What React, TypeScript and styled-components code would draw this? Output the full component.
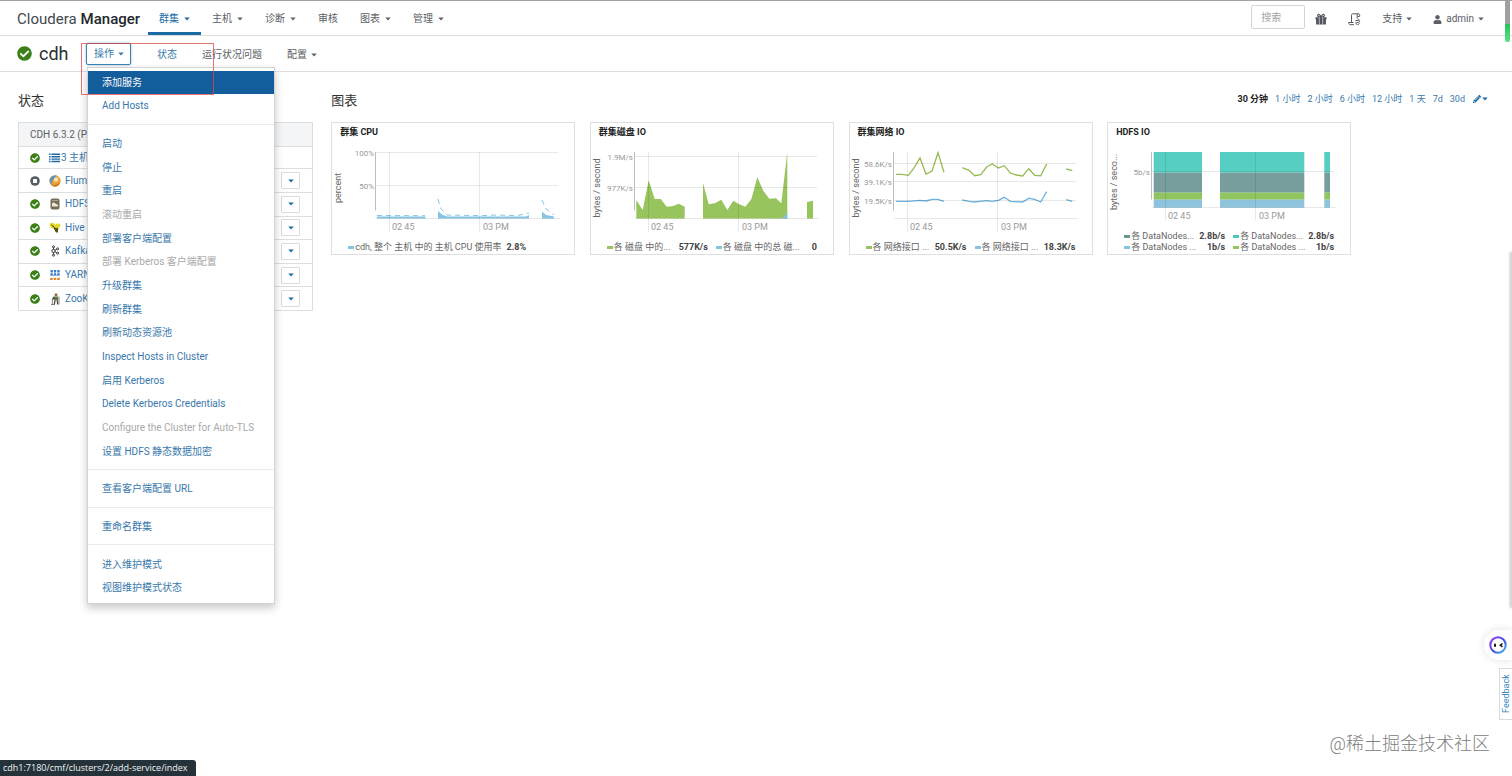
import React from "react";
import styled, { createGlobalStyle } from "styled-components";
import { FaCheckCircle, FaPencilAlt, FaUser } from "react-icons/fa";

const link = "#3878ab";
const grey = "#5c6065";

const Global = createGlobalStyle`
  * { box-sizing: border-box; }
  body {
    margin: 0;
    background: #fff;
    color: #333;
    font-family: Roboto, "Noto Sans CJK SC", sans-serif;
    font-size: 10px;
    line-height: 16px;
  }
  a { color: inherit; text-decoration: none; }
  button, input { font: inherit; }
  ul { list-style: none; margin: 0; padding: 0; }
  h1, h2, h3 { margin: 0; font-weight: 400; }
`;

const Page = styled.div`
  position: relative;
  min-height: 100vh;
  overflow: hidden;
`;

const TopBar = styled.header`
  display: flex;
  align-items: stretch;
  height: 36px;
  padding: 0 28px 0 17px;
  border-top: 1px solid #a2a2a2;
  border-bottom: 1px solid #dedede;
`;

const Brand = styled.a`
  display: flex;
  align-items: center;
  gap: 4px;
  width: 131px;
  padding-top: 1px;
  font-size: 15px;
  color: #43494f;
  white-space: nowrap;
  strong { font-weight: 500; color: #22272c; }
`;

const Nav = styled.nav`
  display: flex;
  flex: 1;
`;

const NavItem = styled.a<{ $active?: boolean }>`
  display: flex;
  align-items: center;
  gap: 5px;
  padding: 5px 11px 0;
  border-bottom: 3px solid ${(p) => (p.$active ? "#1a6ba3" : "transparent")};
  color: ${(p) => (p.$active ? "#1a6ba3" : grey)};
`;

const Tools = styled.div`
  display: flex;
  align-items: center;
  gap: 21px;
  padding-top: 2px;
  color: ${grey};
`;

const ToolLink = styled.a`
  display: flex;
  align-items: center;
  gap: 4px;
`;

const Search = styled.input`
  width: 54px;
  height: 24px;
  margin: 0 -11px 4px 0;
  padding: 0 9px;
  border: 1px solid #d5d5d5;
  border-radius: 2px;
  &::placeholder { color: #a3a3a3; opacity: 1; }
`;

const SubBar = styled.div`
  display: flex;
  align-items: center;
  height: 36px;
  padding: 0 17px;
  border-bottom: 1px solid #dedede;
`;

const ClusterName = styled.h1`
  display: flex;
  align-items: center;
  gap: 7px;
  width: 69px;
  font-size: 18px;
  color: #2b2f33;
  svg { color: #3b7f17; flex: none; }
`;

const Actions = styled.div`
  position: relative;
`;

const ActionButton = styled.button`
  display: flex;
  align-items: center;
  gap: 4px;
  height: 22px;
  width: 45px;
  padding: 0 0 0 7px;
  border: 1px solid #3c7fb1;
  border-radius: 2px;
  background: #fff;
  color: ${link};
  box-shadow: 0 0 3px #9cc0da;
`;

const Tabs = styled.nav`
  display: flex;
  gap: 25px;
  padding: 3px 0 0 26px;
`;

const Tab = styled.a<{ $active?: boolean }>`
  display: flex;
  align-items: center;
  gap: 4px;
  color: ${(p) => (p.$active ? link : grey)};
`;

const Menu = styled.div`
  position: absolute;
  z-index: 5;
  top: 24px;
  left: 1px;
  display: flex;
  flex-direction: column;
  width: 188px;
  min-height: 537px;
  padding: 3px 0;
  border: 1px solid #d4d4d4;
  background: #fff;
  box-shadow: 0 4px 8px rgba(0, 0, 0, 0.22);
`;

const MenuGroup = styled.ul<{ $count: number }>`
  display: flex;
  flex-direction: column;
  flex: ${(p) => p.$count} 0 auto;
  & + & { margin-top: 6px; padding-top: 7px; border-top: 1px solid #ebebeb; }
`;

const MenuRow = styled.li`
  display: flex;
  flex: 1 0 auto;
`;

const MenuLink = styled.a<{ $hot?: boolean; $off?: boolean }>`
  display: flex;
  flex: 1;
  align-items: center;
  min-height: 23px;
  padding: 1px 14px 0;
  white-space: nowrap;
  background: ${(p) => (p.$hot ? "#145d9c" : "transparent")};
  color: ${(p) => (p.$hot ? "#fff" : p.$off ? "#a9a9a9" : link)};
`;

const Highlight = styled.div`
  position: absolute;
  z-index: 6;
  top: 0;
  left: -5px;
  width: 133px;
  height: 52px;
  border: 1px solid rgba(224, 70, 70, 0.75);
  pointer-events: none;
`;

const Content = styled.main`
  display: grid;
  grid-template-columns: 20% minmax(0, 1fr);
  gap: 18px;
  padding: 19px 18px 0;
`;

const SectionHead = styled.div`
  display: flex;
  align-items: center;
  justify-content: space-between;
  height: 20px;
  margin-bottom: 11px;
`;

const SectionTitle = styled.h2`
  font-size: 13px;
  color: #333;
`;

const Services = styled.table`
  width: 100%;
  height: 189px;
  border: 1px solid #dcdfe1;
  border-collapse: collapse;
  th {
    height: 24px;
    padding: 0 11px;
    background: #f3f5f6;
    color: #5c6165;
    font-weight: 400;
    text-align: left;
  }
  td { padding: 0; border-top: 1px solid #dcdfe1; }
`;

const ServiceLine = styled.div`
  display: flex;
  align-items: center;
  padding: 0 12px 0 11px;
  color: ${link};
  svg { flex: none; }
`;

const ServiceLink = styled.a<{ $tight?: boolean }>`
  display: flex;
  align-items: center;
  flex: 1;
  gap: ${(p) => (p.$tight ? 1 : 4)}px;
  margin-left: 9px;
`;

const MoreButton = styled.button`
  display: flex;
  align-items: center;
  justify-content: center;
  width: 19px;
  height: 17px;
  padding: 0;
  border: 1px solid #d9dcde;
  border-radius: 1px;
  background: #fff;
  color: #1a6ba3;
`;

const Ranges = styled.nav`
  display: flex;
  align-items: center;
  gap: 7px;
  padding: 0 6px 4px 0;
  font-size: 9px;
  color: ${link};
`;

const Range = styled.a<{ $active?: boolean }>`
  color: ${(p) => (p.$active ? "#222" : link)};
  font-weight: ${(p) => (p.$active ? 700 : 400)};
`;

const EditLink = styled.a`
  display: flex;
  align-items: center;
  gap: 1px;
  margin-left: 1px;
  color: #1a6ba3;
`;

const Charts = styled.div`
  display: flex;
  flex-wrap: wrap;
  justify-content: space-between;
  gap: 14px;
  max-width: 1020px;
`;

const Card = styled.section`
  display: flex;
  flex-direction: column;
  width: 244px;
  min-height: 133px;
  border: 1px solid #dfdfdf;
  svg { display: block; }
`;

const CardTitle = styled.h3`
  height: 19px;
  padding-left: 8px;
  font-size: 9px;
  line-height: 19px;
  font-weight: 700;
  color: #222;
`;

const Legend = styled.div<{ $single?: boolean }>`
  display: grid;
  grid-template-columns: ${(p) => (p.$single ? "max-content" : "101px 101px")};
  column-gap: 8px;
  padding-left: 16px;
  font-size: 9px;
  line-height: 11px;
  color: #666;
`;

const LegendItem = styled.div`
  display: flex;
  align-items: center;
  gap: 1px;
  white-space: nowrap;
  b { margin-left: auto; padding-left: 4px; color: #444; }
`;

const Swatch = styled.i<{ $color: string }>`
  width: 6px;
  height: 3px;
  background: ${(p) => p.$color};
`;

const StatusBar = styled.footer`
  position: absolute;
  left: 0;
  bottom: 0;
  padding: 0 8px 0 3px;
  border-top-right-radius: 3px;
  background: #25323a;
  color: #f2f2f2;
  font-family: "Open Sans", sans-serif;
  font-size: 9px;
`;

const Watermark = styled.div`
  position: absolute;
  right: 22px;
  bottom: 19px;
  font-size: 18px;
  line-height: 26px;
  font-weight: 300;
  color: #808080;
`;

const Feedback = styled.button`
  position: absolute;
  right: -2px;
  bottom: 56px;
  width: 15px;
  height: 52px;
  padding: 0;
  border: 1px solid #d7dbde;
  background: #fff;
  color: #3a87bd;
  font-size: 9px;
  line-height: 13px;
  writing-mode: vertical-rl;
  rotate: 180deg;
`;

const Assistant = styled.button`
  position: absolute;
  right: 0;
  bottom: 116px;
  display: flex;
  align-items: center;
  width: 28px;
  height: 30px;
  padding: 0 0 0 5px;
  border: 0;
  border-radius: 15px 0 0 15px;
  background: #fff;
  box-shadow: 0 0 8px rgba(0, 0, 0, 0.12);
`;

const LoadMarker = styled.div`
  position: absolute;
  top: 0;
  right: 2px;
  width: 5px;
  height: 42px;
  border-radius: 0 0 2px 2px;
  background: linear-gradient(#a0a0a0 24px, #25c25c 24px, #5ae284);
`;

const SidePanelEdge = styled.div`
  position: absolute;
  top: 252px;
  right: -2px;
  width: 4px;
  height: 356px;
  border-radius: 3px;
  background: #d8d8d8;
  box-shadow: 0 0 3px rgba(0, 0, 0, 0.25);
`;

const Caret = () => (
  <svg width="6" height="4" viewBox="0 0 6 4" fill="currentColor" aria-hidden>
    <path d="M.3.400h5.400L3 3.600z" />
  </svg>
);

const GiftIcon = () => (
  <svg width="12" height="12" viewBox="0 0 12 12" aria-hidden>
    <path d="M.5 4.200h11v2.400h-.6V11.500H1.100V6.600H.5z" fill="#50545a" />
    <path d="M6 4C5 1.200 3 .6 2.700 2.200 2.600 3.500 4 4 6 4zM6 4C7 1.200 9 .6 9.300 2.200 9.400 3.500 8 4 6 4z" fill="none" stroke="#50545a" strokeWidth="1.200" />
    <path d="M4.300 4.200v7.300M7.700 4.200v7.300" stroke="#fff" strokeWidth=".6" />
  </svg>
);

const ListIcon = () => (
  <svg width="11" height="10" viewBox="0 0 11 10" fill="#1f69a6" aria-hidden>
    <path d="M0 .6h1.600V2H0zM2.400.600H11V2H2.400zM0 3h1.600v1.400H0zM2.400 3H11v1.400H2.400zM0 5.400h1.600v1.400H0zM2.400 5.400H11v1.400H2.400zM0 7.800h1.600v1.400H0zM2.400 7.800H11v1.400H2.400z" />
  </svg>
);

const ScrollIcon = () => (
  <svg width="13" height="13" viewBox="0 0 13 13" fill="none" stroke="#55595e" aria-hidden>
    <path d="M3.500 9V2.200C3.500 1.200 4.100.8 4.800.8h5.600c-.9 0-1.200.6-1.200 1.400V5.500M10.400.8c.9 0 1.300.6 1.300 1.600v1H9.400M6 11.700H2.200C1.200 11.700.7 10.900.7 9.500h4.800" />
    <path d="M7.500 7.500h2.800c1.600 0 1.600 2 0 2H8.500M10 5.800l1.700 1.700M9.500 11.800 11.500 10.500M7.500 9.500l1.500 2.300" />
  </svg>
);

const StatusOk = () => <FaCheckCircle size={10} color="#3b7f17" aria-label="OK" />;
const StatusStopped = () => (
  <svg width="10" height="10" viewBox="0 0 9 9" aria-label="stopped">
    <circle cx="4.5" cy="4.5" r="4.300" fill="#575c61" />
    <rect x="2.700" y="2.700" width="3.600" height="3.600" rx=".5" fill="#fff" />
  </svg>
);

const icons: Record<string, React.ReactNode> = {
  Flume: (
    <>
      <circle cx="6" cy="6" r="5.700" fill="#e8a33a" />
      <path d="M.5 5C1 2 4-.2 8 .8 6 2 6 4 4 5s-1 4-1 5A6 6 0 0 1 .5 5z" fill="#5f91bd" />
      <circle cx="7" cy="4.500" r="2.200" fill="#fbe3a4" />
      <path d="M3 9.500c3 1 6 0 8-2.500-.5 3-3 4.600-5 4.500S4 11 3 9.500z" fill="#c96f22" />
    </>
  ),
  HDFS: (
    <>
      <rect x="1.500" y=".5" width="9" height="11" rx="2" fill="#756d58" />
      <path d="M3 8.500V5.500C3.500 4 5.500 4 6.500 5.500l2.500 1.500v1.500z" fill="#ece6d4" />
      <path d="M3 2.500h6" stroke="#aaa289" />
    </>
  ),
  Hive: (
    <>
      <path d="M.3 2.500C2 0 5 .5 6.500 3 8 .8 11 1.500 11.500 3S10 6 8 6.500C4 7.500 1 6 .3 2.500z" fill="#e4da26" />
      <path d="M4.500 5.500 9.500 6 8.500 11.500 6 9z" fill="#8c8018" />
      <path d="m5 6.500 4 1M6 8.700l3 .6M2.500 3l3 2.500" stroke="#292811" />
    </>
  ),
  Kafka: (
    <g fill="none" stroke="#333">
      <circle cx="4.500" cy="6" r="1.600" />
      <circle cx="4.500" cy="1.800" r="1" />
      <circle cx="4.500" cy="10.200" r="1" />
      <circle cx="8.600" cy="3.800" r="1" />
      <circle cx="8.600" cy="8.200" r="1" />
      <path d="M4.500 2.800v1.600M4.500 7.600v1.600M6 5.200l1.700-.9M6 6.800l1.700.9" />
    </g>
  ),
  YARN: (
    <>
      <path d="M1.500 1h2.300v2.600H1.500zM4.900 1h2.300v2.600H4.900zM8.300 1h2.300v2.600H8.300zM1.500 4.200h2.300v2.600H1.500zM4.900 4.200h2.300v2.600H4.900zM8.300 4.200h2.300v2.600H8.300z" fill="#3878c7" />
      <path d="M1.500 6.500h9" stroke="#7fa9dc" />
      <path d="M1.200 8.800h2.600V11H1.200zM4.700 8.800h2.600V11H4.700zM8.200 8.800h2.600V11H8.200z" fill="#de8a35" />
    </>
  ),
  ZooKeeper: (
    <>
      <circle cx="7" cy="1.800" r="1.500" fill="#8a6d4d" />
      <path d="M5 3.500h4l.3 4H5z" fill="#60744d" />
      <path d="M6 7.500 5.300 11.500M8.300 7.500l.4 4M5.300 4 3.500 6.500" stroke="#464437" strokeWidth="1.300" />
      <path d="M10 3.500v8M2 11.500h4M3.300 6v5" stroke="#6a6656" strokeWidth=".8" />
    </>
  ),
};

const menu: { label: string; off?: boolean; hot?: boolean }[][] = [
  [{ label: "添加服务", hot: true }, { label: "Add Hosts" }],
  [
    { label: "启动" },
    { label: "停止" },
    { label: "重启" },
    { label: "滚动重启", off: true },
    { label: "部署客户端配置" },
    { label: "部署 Kerberos 客户端配置", off: true },
    { label: "升级群集" },
    { label: "刷新群集" },
    { label: "刷新动态资源池" },
    { label: "Inspect Hosts in Cluster" },
    { label: "启用 Kerberos" },
    { label: "Delete Kerberos Credentials" },
    { label: "Configure the Cluster for Auto-TLS", off: true },
    { label: "设置 HDFS 静态数据加密" },
  ],
  [{ label: "查看客户端配置 URL" }],
  [{ label: "重命名群集" }],
  [{ label: "进入维护模式" }, { label: "视图维护模式状态" }],
];

type PlotProps = {
  height?: number;
  unit: string;
  unitY: number;
  ticks: [string, number][];
  base: number;
  children: React.ReactNode;
};

const Plot = ({ height = 100, unit, unitY, ticks, base, children }: PlotProps) => (
  <svg width="242" height={height} viewBox={`0 0 242 ${height}`} fontSize="9" fill="#999">
    {children}
    <g stroke="#000" strokeOpacity=".09">
      {ticks.map(([t, y]) => (
        <path key={t} d={`M44 ${y}H226`} />
      ))}
      <path d={`M57.500 10V${base + 13}M147.500 10V${base + 13}M44 ${base}H228`} />
    </g>
    <path d={`M43.500 10V${base - 8}`} stroke="#bdbdbd" />
    {ticks.map(([t, y]) => (
      <text key={t} x="42" y={y + 3} textAnchor="end" fontSize="8">{t}</text>
    ))}
    <text x="60" y={base + 11}>02 45</text>
    <text x="151" y={base + 11}>03 PM</text>
    <text transform={`translate(9 ${unitY}) rotate(-90)`} textAnchor="middle" fill="#666">{unit}</text>
  </svg>
);

const Item = ({ color, name, value }: { color: string; name: string; value: string }) => (
  <LegendItem>
    <Swatch $color={color} />
    <span>{name}</span>
    <b>{value}</b>
  </LegendItem>
);

const green = "#97c45c";
const blue = "#84c5e4";
const bars = [[45.7, 48.3], [112, 84.3], [216.3, 5.7]];
const bands: [number, number, string][] = [
  [10, 20.7, "#56cec2"],
  [30.7, 20, "#779e9d"],
  [50.7, 7, "#91c560"],
  [57.7, 8, "#8dc3dd"],
];

export default function App() {
  return (
    <Page>
      <Global />
      <TopBar>
        <Brand href="#"><span>Cloudera</span><strong>Manager</strong></Brand>
        <Nav>
          <NavItem href="#" $active>群集 <Caret /></NavItem>
          <NavItem href="#">主机 <Caret /></NavItem>
          <NavItem href="#">诊断 <Caret /></NavItem>
          <NavItem href="#">审核</NavItem>
          <NavItem href="#">图表 <Caret /></NavItem>
          <NavItem href="#">管理 <Caret /></NavItem>
        </Nav>
        <Tools>
          <Search placeholder="搜索" aria-label="搜索" />
          <ToolLink href="#" aria-label="parcels"><GiftIcon /></ToolLink>
          <ToolLink href="#" aria-label="commands"><ScrollIcon /></ToolLink>
          <ToolLink href="#">支持 <Caret /></ToolLink>
          <ToolLink href="#"><FaUser size={9} />admin <Caret /></ToolLink>
        </Tools>
      </TopBar>

      <SubBar>
        <ClusterName><FaCheckCircle size={15} />cdh</ClusterName>
        <Actions>
          <ActionButton aria-expanded="true">操作 <Caret /></ActionButton>
          <Menu>
            {menu.map((group, i) => (
              <MenuGroup key={i} $count={group.length}>
                {group.map((m) => (
                  <MenuRow key={m.label}>
                    <MenuLink href="#" $hot={m.hot} $off={m.off} aria-disabled={m.off}>{m.label}</MenuLink>
                  </MenuRow>
                ))}
              </MenuGroup>
            ))}
          </Menu>
          <Highlight />
        </Actions>
        <Tabs>
          <Tab href="#" $active>状态</Tab>
          <Tab href="#">运行状况问题</Tab>
          <Tab href="#">配置 <Caret /></Tab>
        </Tabs>
      </SubBar>

      <Content>
        <section>
          <SectionHead><SectionTitle>状态</SectionTitle></SectionHead>
          <Services>
            <thead>
              <tr><th>CDH 6.3.2 (Parcel)</th></tr>
            </thead>
            <tbody>
              <tr>
                <td>
                  <ServiceLine>
                    <StatusOk />
                    <ServiceLink href="#" $tight><ListIcon />3 主机</ServiceLink>
                  </ServiceLine>
                </td>
              </tr>
              {Object.entries(icons).map(([name, art]) => (
                <tr key={name}>
                  <td>
                    <ServiceLine>
                      {name === "Flume" ? <StatusStopped /> : <StatusOk />}
                      <ServiceLink href="#">
                        <svg width="12" height="12" viewBox="0 0 12 12" aria-hidden>{art}</svg>
                        {name}
                      </ServiceLink>
                      <MoreButton aria-label={name}><Caret /></MoreButton>
                    </ServiceLine>
                  </td>
                </tr>
              ))}
            </tbody>
          </Services>
        </section>

        <section>
          <SectionHead>
            <SectionTitle>图表</SectionTitle>
            <Ranges>
              <Range href="#" $active>30 分钟</Range>
              {["1 小时", "2 小时", "6 小时", "12 小时", "1 天", "7d", "30d"].map((r) => (
                <Range key={r} href="#">{r}</Range>
              ))}
              <EditLink href="#" aria-label="edit"><FaPencilAlt size={8} /><Caret /></EditLink>
            </Ranges>
          </SectionHead>
          <Charts>
            <Card>
              <CardTitle>群集 CPU</CardTitle>
              <Plot unit="percent" unitY={46} ticks={[["100%", 10.5], ["50%", 43.5]]} base={76.5}>
                <path d="M45 76.500V74.500H93.500V76.500zM106 76.500V69L110 72.500 115 74.500H194L197 73V76.500zM210 76.500V69.500L214 73 222 74.500V76.500z" fill={blue} />
                <path d="M45 73.500 93 73.700M106 57 109 67 115 73 150 73.700 165 73 185 73.700 197 71M210 58 214 67 222 73" fill="none" stroke={blue} strokeDasharray="5 4" />
              </Plot>
              <Legend $single>
                <Item color={blue} name="cdh, 整个 主机 中的 主机 CPU 使用率" value="2.8%" />
              </Legend>
            </Card>
            <Card>
              <CardTitle>群集磁盘 IO</CardTitle>
              <Plot unit="bytes / second" unitY={46} ticks={[["1.9M/s", 14.5], ["977K/s", 45.5]]} base={76.5}>
                <path fill={green} d="M45.300 76.500V58L51.700 68 57.700 38.300 63.700 57H69.700L75.700 64.700 82.300 64 87.700 61.700 93.700 64.700V76.500zM112 76.500V41L117.700 62.300 124.300 61 130.300 57.700 136.300 68 142.300 58.700 147.700 62 154.300 64.700 160.300 57.300 166.300 35.300 172.300 48.700 178.300 56.700 185 56.300 190.300 61.300 196.300 10.300V76.500zM216 76.500V60L222 58.700V76.500z" />
                <path fill={blue} d="M191 76.500 196.300 71.300V76.500z" />
              </Plot>
              <Legend>
                <Item color={green} name="各 磁盘 中的..." value="577K/s" />
                <Item color={blue} name="各 磁盘 中的总 磁..." value="0" />
              </Legend>
            </Card>
            <Card>
              <CardTitle>群集网络 IO</CardTitle>
              <Plot unit="bytes / second" unitY={46} ticks={[["58.6K/s", 21.5], ["39.1K/s", 39.5], ["19.5K/s", 58.5]]} base={76.5}>
                <g fill="none" strokeWidth="1.300">
                  <path stroke="#94bc50" d="M46 32.300H52L58.300 33.300 63.700 26.300 70 16 76 32 82 29 88 10.700 94 30.300M112.300 25.700 119 28.300 124.700 33.700 130.700 32.700 136.700 25 142.300 22 148.300 26 154.300 23.700 160.300 31 166.300 33 172.700 34 178.700 26.700 184.700 33.300 190.700 33.700 196.700 22M216.300 27 222.300 28.700" />
                  <path stroke="#6bb5de" d="M46 59.300H58.300L70 58.300 76 59 82 57.300H88L94 59.300M112.300 58 119 59.300 124.700 60 136.700 58.700 142.300 59.300 148.300 58.300 154.300 55.300 160.300 59.300 172.700 60 178.700 56.300 184.700 57.300 190.700 60 196.700 49.700M216.300 57.700 222.300 59.300" />
                </g>
              </Plot>
              <Legend>
                <Item color={green} name="各 网络接口 ..." value="50.5K/s" />
                <Item color={blue} name="各 网络接口 ..." value="18.3K/s" />
              </Legend>
            </Card>
            <Card>
              <CardTitle>HDFS IO</CardTitle>
              <Plot height={89} unit="bytes / seco..." unitY={40} ticks={[["5b/s", 29.5]]} base={65.5}>
                {bars.map(([x, w]) =>
                  bands.map(([y, h, fill]) => <rect key={`${x}-${y}`} x={x} y={y} width={w} height={h} fill={fill} />)
                )}
              </Plot>
              <Legend>
                <Item color="#6c9492" name="各 DataNodes..." value="2.8b/s" />
                <Item color="#49c9bb" name="各 DataNodes..." value="2.8b/s" />
                <Item color={blue} name="各 DataNodes ..." value="1b/s" />
                <Item color={green} name="各 DataNodes ..." value="1b/s" />
              </Legend>
            </Card>
          </Charts>
        </section>
      </Content>

      <LoadMarker />
      <SidePanelEdge />
      <Assistant aria-label="assistant">
        <svg width="18" height="18" viewBox="0 0 18 18">
          <defs>
            <linearGradient id="ring" x1="0" y1="0" x2="1" y2="1">
              <stop offset="0" stopColor="#9b3df0" />
              <stop offset=".5" stopColor="#4a45e0" />
              <stop offset="1" stopColor="#3bc0ee" />
            </linearGradient>
          </defs>
          <circle cx="9" cy="9" r="7.700" fill="#fff" stroke="url(#ring)" strokeWidth="2" />
          <rect x="5" y="7.500" width="2" height="3.500" rx="1" fill="#111" />
          <path d="M13.500 7.500 11.300 9.200 13.500 11" fill="none" stroke="#111" strokeWidth="1.500" />
        </svg>
      </Assistant>
      <Feedback>Feedback</Feedback>
      <Watermark>@稀土掘金技术社区</Watermark>
      <StatusBar>cdh1:7180/cmf/clusters/2/add-service/index</StatusBar>
    </Page>
  );
}
